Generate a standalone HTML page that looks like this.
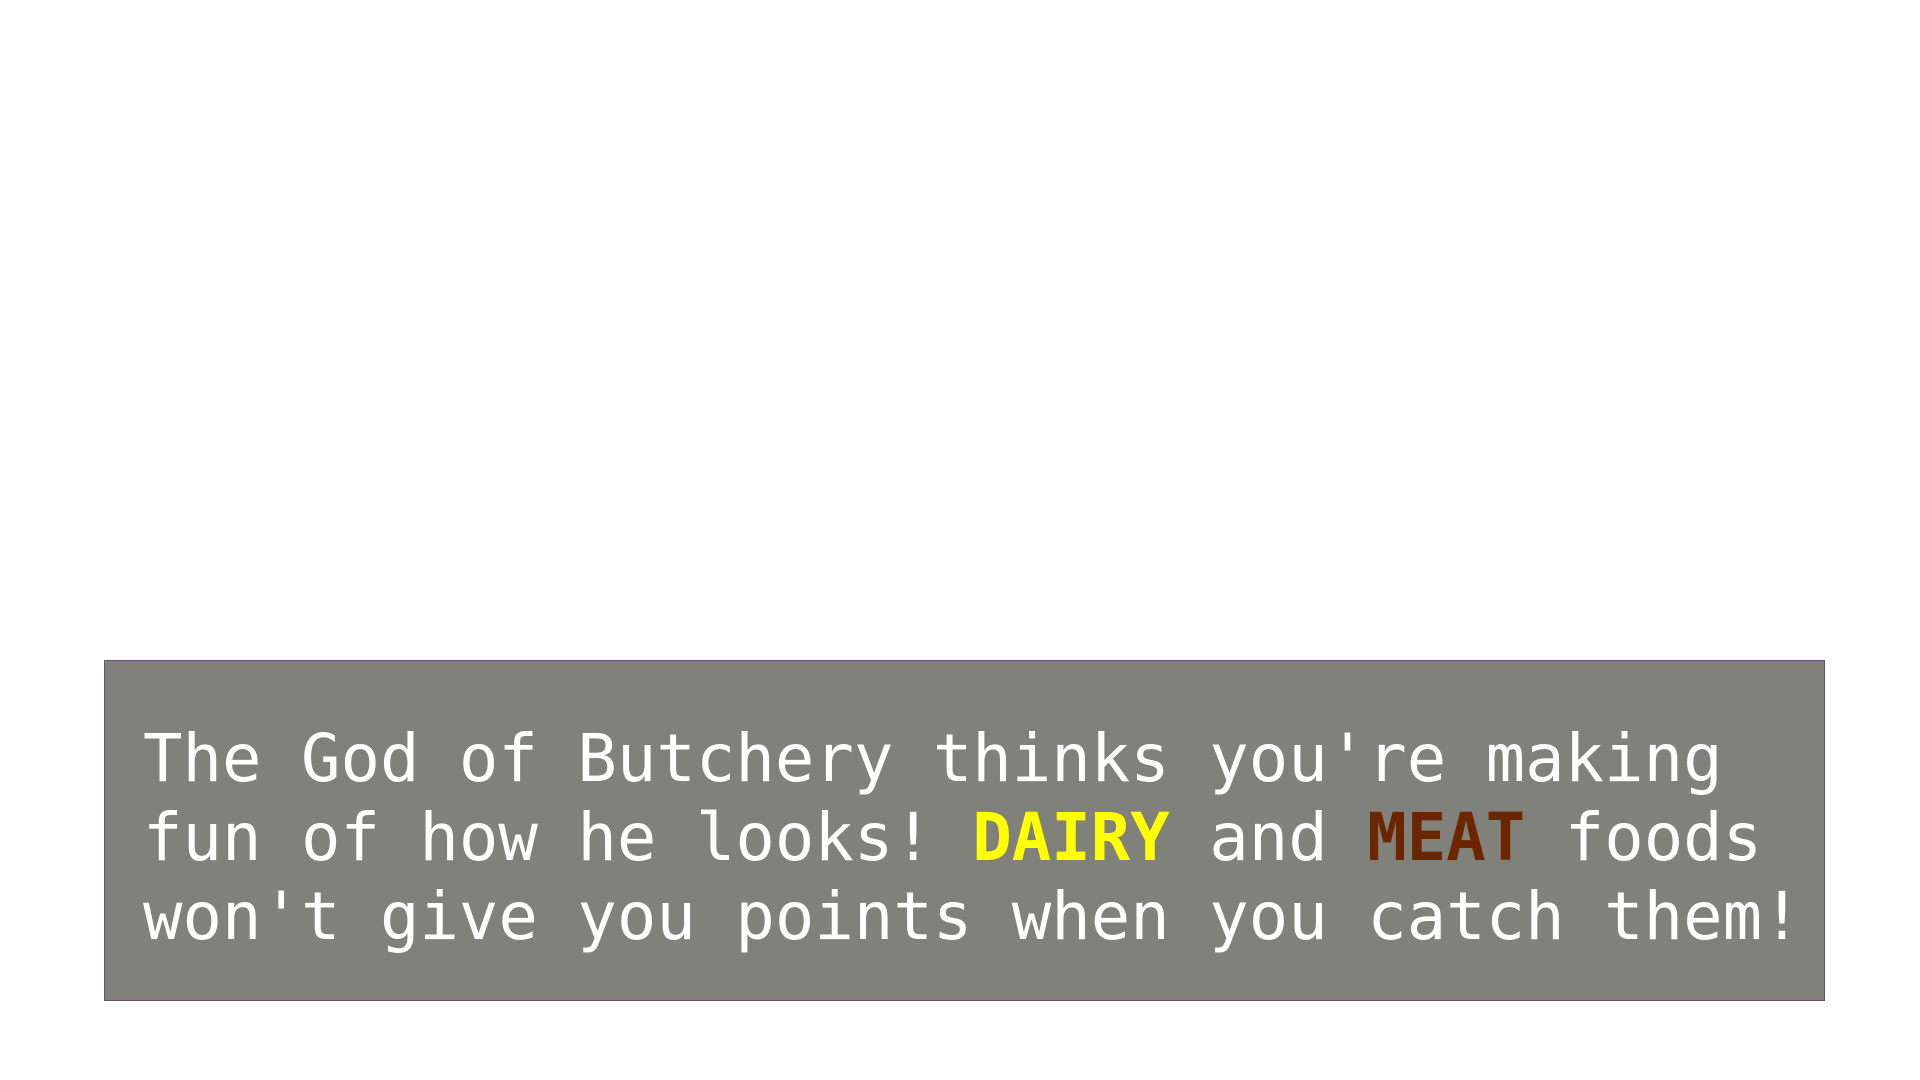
<!DOCTYPE html>
<html><head><style>
html,body{margin:0;padding:0;background:#fff;width:1920px;height:1080px;overflow:hidden}
.box{position:absolute;left:104px;top:660px;width:1721px;height:341px;background:#81817b;border:1px solid #6b4a7c;box-sizing:border-box}
.t{position:absolute;left:38px;top:59px;font-family:"DejaVu Sans Mono","Liberation Mono",monospace;font-size:65.6px;line-height:79px;color:#fff;white-space:pre}
.y{color:#ffff00;font-weight:bold}
.m{color:#6b2600;font-weight:bold}
</style></head><body>
<div class="box"><div class="t">The God of Butchery thinks you're making
fun of how he looks! <span class="y">DAIRY</span> and <span class="m">MEAT</span> foods
won't give you points when you catch them!</div></div>
</body></html>
